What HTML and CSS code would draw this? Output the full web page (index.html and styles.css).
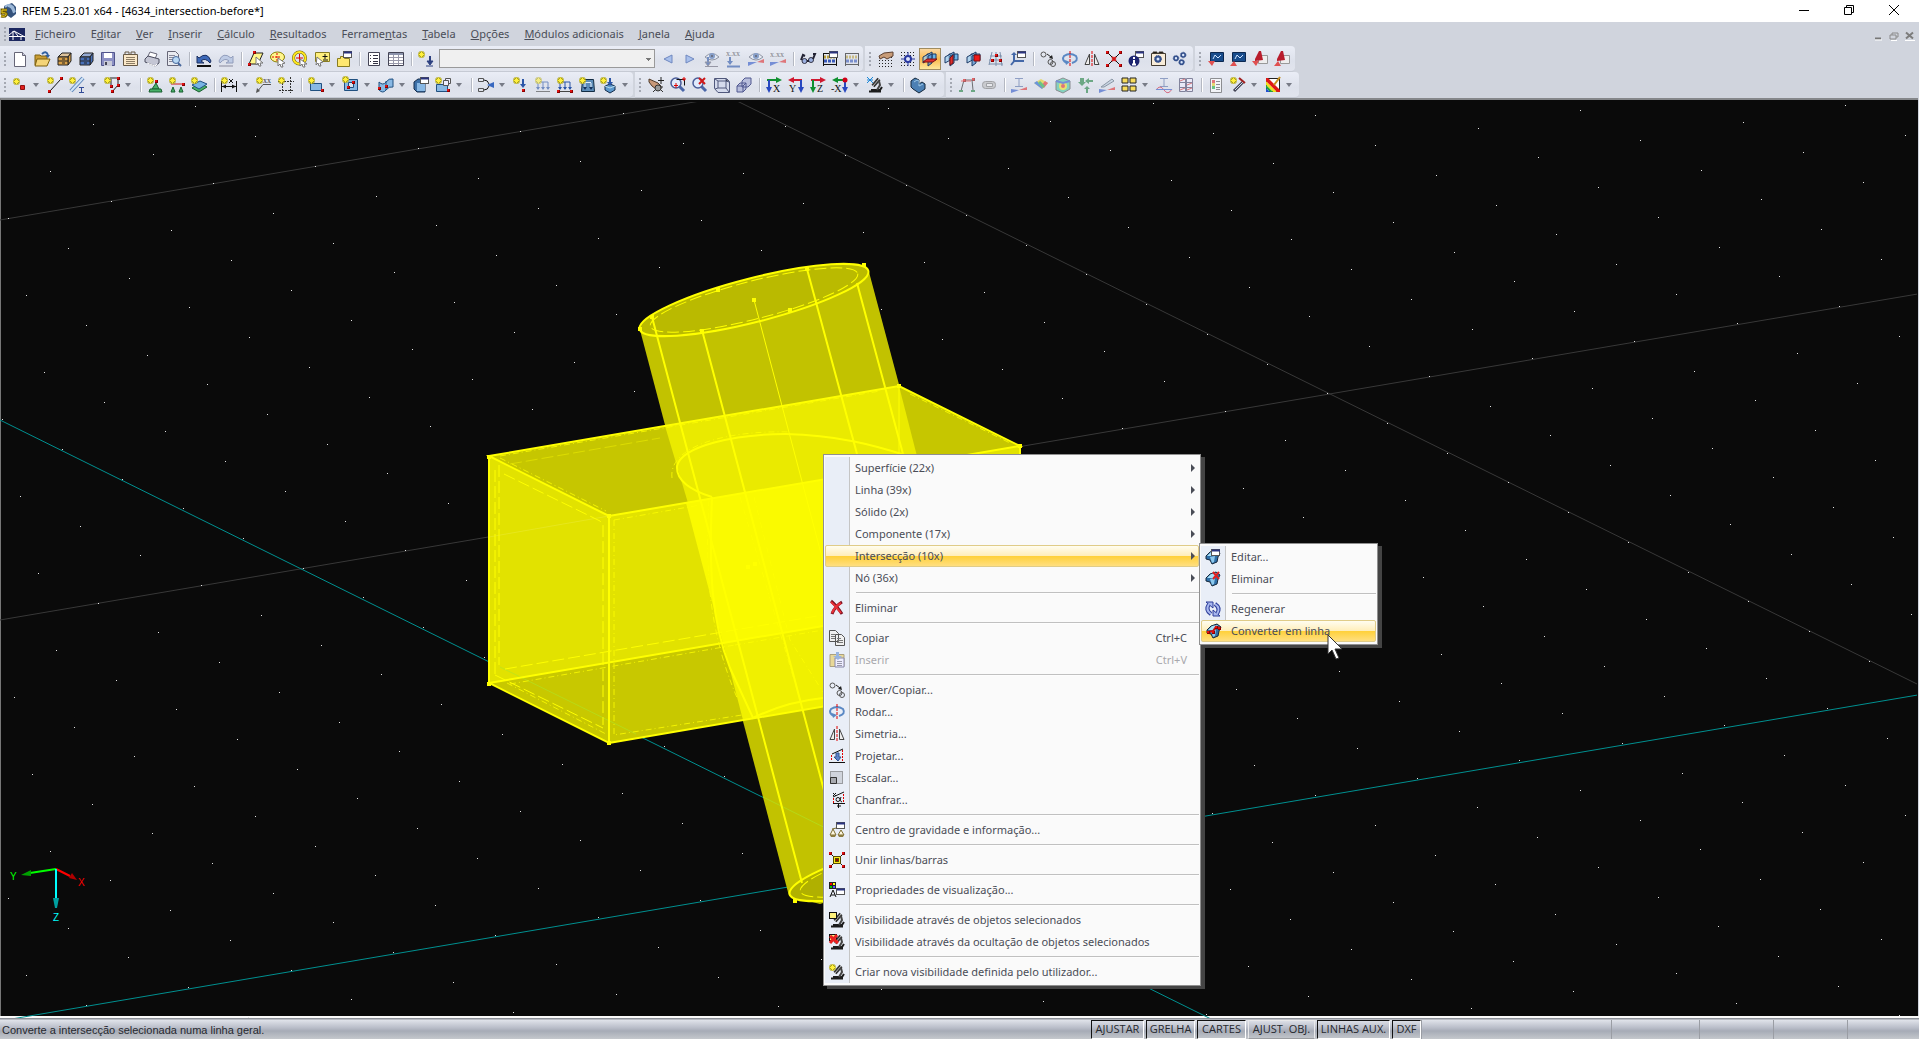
FILE: index.html
```html
<!DOCTYPE html>
<html lang="pt">
<head>
<meta charset="utf-8">
<title>RFEM 5.23.01 x64 - [4634_intersection-before*]</title>
<link rel="stylesheet" href="styles.css">
</head>
<body>
<svg class="defs" aria-hidden="true">
  <defs>
    <g id="star"><path d="M3.500 0v7M0 3.500h7M1 1l5 5M6 1L1 6" stroke="#a8a020" stroke-width="2"/><path d="M3.500 .5v6M.5 3.500h6M1.500 1.500l4 4M5.500 1.500l-4 4" stroke="#fff03c"/></g>
    <g id="dot"><rect width="3" height="3" fill="#e01010"/><path d="M0 2.500h3M2.500 0v3" stroke="#8c0000"/></g>
    <g id="win"><rect x=".5" y=".5" width="8" height="6" fill="#fff" stroke="#555"/><path d="M1 1.500h8" stroke="#2b3480" stroke-width="2"/></g>
    <g id="solid"><path d="M1 7l4-4 6-2 4 3-2 4-1 5-5 2-2-4-4-1z" fill="#2f6fa8" stroke="#16283c"/><path d="M2 7l4-4 6-1-3 5z" fill="#a8e0f8"/><path d="M5 8l5-1-1 6-2 1z" fill="#8cc8ec"/></g>
    <g id="lens"><path d="M9 9l5 5" stroke="#4a66a8" stroke-width="3"/><circle cx="6" cy="6" r="5" fill="#dfeafc" stroke="#4a5c98" stroke-width="1.500"/></g>
    <g id="scope"><path d="M2 14.500h12M4 13h9l2-3" stroke="#1c1c1c" stroke-width="2" fill="none"/><path d="M6 9l6-7" stroke="#333" stroke-width="4"/><path d="M6 9l6-7" stroke="#bbb"/><path d="M12 4l1 4-3 5" stroke="#444" stroke-width="2" fill="none"/></g>
    <g id="planes"><path d="M5 3h9v6H5z" fill="#6db4e6" stroke="#1c3a66"/><path d="M1 12V6l9-5v6z" fill="#9ccdf0" stroke="#1c3a66" fill-opacity=".7"/><path d="M6 15V5l4-2v9z" fill="#4c8ccc" stroke="#1c3a66" fill-opacity=".7"/></g>
    <g id="loads"><path d="M3 5h10M3 5v7M8 5v7M13 5v7" stroke="#2c56a8"/><path d="M1 10h4l-2 3zM6 10h4l-2 3zM11 10h4l-2 3z" fill="#2c56a8"/><path d="M1 14.500h14" stroke="#444"/></g>
    <g id="eye"><path d="M1 6q7-7 14 0q-7 6-14 0z" fill="#e8eef8" stroke="#5a6072"/><circle cx="8" cy="5" r="3" fill="#4a70b0"/><circle cx="8" cy="5" r="1" fill="#112"/></g>
    <g id="move"><circle cx="3.500" cy="3.500" r="2.500" fill="none" stroke="#555"/><circle cx="10.500" cy="11" r="2.500" fill="none" stroke="#555"/><circle cx="13" cy="13" r="2.500" fill="none" stroke="#555"/><path d="M7 3l4 3" stroke="#222"/><path d="M13 8l-4-1 3-3z" fill="#222"/></g>
    <g id="rotate"><path d="M5 12q-6-3-3-7q6-4 12 0q3 5-4 7" fill="none" stroke="#5a88c4" stroke-width="2"/><path d="M3 9l5 2-4 3z" fill="#5a88c4"/><path d="M8 0v16" stroke="#e00000" stroke-dasharray="3 1"/></g>
    <g id="mirror"><path d="M5.500 3v10.500H1zM10.500 3v10.500H15z" fill="#eee" stroke="#444"/><path d="M8 0v16" stroke="#e00000" stroke-dasharray="3 1"/></g>
    <g id="join"><path d="M2 2l12 12M14 2L2 14" stroke="#111"/><use href="#dot"/><use href="#dot" x="13"/><use href="#dot" y="13"/><use href="#dot" x="13" y="13"/></g>
    <g id="redx"><path d="M2 1q5 4 11 13M13 2Q6 6 3 14" stroke="#7c1020" stroke-width="3" fill="none"/><path d="M2 2q5 4 10 11M12 3Q6 6 3 13" stroke="#e83038" stroke-width="2" fill="none"/></g>
    <g id="cab"><path d="M2 6l4-4h9l-3 4z" fill-opacity=".5" stroke="#222"/><path d="M12 6l3-4v8l-3 4z" stroke="#222"/><path d="M2 6h10v8H2z" stroke="#222"/><path d="M2 10h10M6 8h3M6 12h3" stroke="#222"/></g>
    <g id="abacus"><path d="M1.500 2v13M14.500 2v13M1 13.500h14M1 2.500h13" stroke="#111"/><path d="M2 6h12" stroke="#b8a040" stroke-width="3" stroke-dasharray="2 1"/><path d="M2 10h12" stroke="#3858b8" stroke-width="3" stroke-dasharray="3 1"/></g>
    <g id="gear"><circle cx="4" cy="4" r="2.500" fill="#dce8fc" stroke="#34508c" stroke-width="2"/><circle cx="4" cy="4" r="3.500" fill="none" stroke="#34508c" stroke-dasharray="1 1"/></g>
    <g id="beam"><path d="M4 1.500h8M8 2v7M4 9.500h8" stroke="#5870a8"/></g>
  </defs>
</svg>

<div class="app">
  <header class="title">
    <svg width="18" height="18" aria-hidden="true"><path d="M4 4l8-3 4 4v7l-5 4-7-5z" fill="#34527c"/><path d="M5 5q4-4 8 0l2 5M8 4q4 0 6 7" stroke="#9cb8d8" fill="none" stroke-width="2"/><path d="M7 8H2v3q5-1 4 2q-1 2-5 1" stroke="#6c5800" fill="none" stroke-width="3"/><path d="M7 8H2v3q5-1 4 2q-1 2-5 1" stroke="#f0d020" fill="none" stroke-width="1"/></svg>
    <h1>RFEM 5.23.01 x64 - [4634_intersection-before*]</h1>
    <div class="winbtns">
      <button aria-label="Minimizar"><svg width="12" height="12"><path d="M1 6.500h10" stroke="#000"/></svg></button>
      <button aria-label="Restaurar"><svg width="12" height="12"><path d="M1.500 3.500h7v7h-7zM3.500 3V1.500h7v7H9" stroke="#000" fill="none"/></svg></button>
      <button aria-label="Fechar"><svg width="12" height="12"><path d="M1 1l10 10M11 1L1 11" stroke="#000"/></svg></button>
    </div>
  </header>

  <nav class="menubar">
    <span class="grip"></span>
    <svg width="16" height="13" aria-hidden="true"><path d="M0 0h16v13H0z" fill="#1c2860"/><path d="M0 8.500h16M4 12V3M0 7l5-4 11 6M12 12V8M5 3L9 8" stroke="#fff" fill="none"/></svg>
    <ul>
      <li><a href="#"><u>F</u>icheiro</a></li><li><a href="#">E<u>d</u>itar</a></li><li><a href="#"><u>V</u>er</a></li><li><a href="#"><u>I</u>nserir</a></li><li><a href="#"><u>C</u>álculo</a></li><li><a href="#"><u>R</u>esultados</a></li><li><a href="#">Ferrame<u>n</u>tas</a></li><li><a href="#"><u>T</u>abela</a></li><li><a href="#"><u>O</u>pções</a></li><li><a href="#"><u>M</u>ódulos adicionais</a></li><li><a href="#"><u>J</u>anela</a></li><li><a href="#"><u>A</u>juda</a></li>
    </ul>
    <div class="docbtns">
      <button aria-label="Minimizar documento"><svg width="10" height="10"><path d="M2 7.500h6" stroke="#777" stroke-width="2"/><path d="M2 9h7" stroke="#fff"/></svg></button>
      <button aria-label="Restaurar documento"><svg width="10" height="10"><path d="M1 4h6v4H1zM3 4V2h6v4H7" stroke="#8a8a8a" fill="none"/><path d="M2 9.500h6" stroke="#fff"/></svg></button>
      <button aria-label="Fechar documento"><svg width="10" height="10"><path d="M1 1.500l7 6M8 1.500l-7 6" stroke="#7c7c7c" stroke-width="2"/><path d="M0 9.500h10" stroke="#fff"/></svg></button>
    </div>
  </nav>

  <div class="toolrow">
    <div class="bar">
      <span class="grip"></span>
      <button class="tb" aria-label="Novo"><svg><path d="M2.500 1.500h8l3 3v11h-11z" fill="#fff" stroke="#667"/><path d="M10.500 1.500v3h3" fill="#ccd" stroke="#667"/></svg></button>
      <button class="tb" aria-label="Abrir"><svg><path d="M1 4h5l1 1h6v9H1z" fill="#c89c34" stroke="#7c6010"/><path d="M3 8h13l-3 7H1z" fill="#f4d478" stroke="#7c6010"/><path d="M8 3q4-4 6 1" stroke="#3060a0" fill="none" stroke-width="2"/><path d="M11 4h5l-2 3z" fill="#3060a0"/></svg></button>
      <button class="tb" aria-label="Gestor de projetos"><svg fill="#d8a048"><use href="#cab"/></svg></button>
      <button class="tb" aria-label="Gestor de blocos"><svg fill="#4870b8"><use href="#cab"/></svg></button>
      <button class="tb" aria-label="Guardar"><svg><path d="M1.500 1.500h13v13h-13z" fill="#8c90c4" stroke="#50548c"/><path d="M4 2h8v5H4z" fill="#fff"/><path d="M4 10h8v5H4z" fill="#c8cad8"/><path d="M5 11h2v3H5z" fill="#445"/></svg></button>
      <button class="tb" aria-label="Comentário"><svg><path d="M1.500 3.500h14v11h-14z" fill="#fbe8c8" stroke="#665844"/><path d="M3 3V1h4v2M9 3V1h4v2" stroke="#665844" fill="none"/><path d="M4 6.500h9M4 8.500h9M4 10.500h9M4 12.500h9" stroke="#8c7c64"/></svg></button>
      <button class="tb" aria-label="Imprimir"><svg><path d="M4 5l2-4 7 2-2 5z" fill="#fff" stroke="#667"/><path d="M1 8l3-3 11 3v4l-4 3-10-4z" fill="#c4c6d4" stroke="#4c4e60"/><path d="M3 12l8 3 2-2" fill="none" stroke="#fff"/></svg></button>
      <button class="tb" aria-label="Pré-visualizar"><svg><path d="M1.500.5h8l3 3v11h-11z" fill="#e8eaf0" stroke="#667"/><path d="M3 4.500h6M3 6.500h6M3 8.500h4M3 10.500h4" stroke="#889"/><circle cx="10" cy="9" r="3.500" fill="#b8d8f4" stroke="#48689c"/><path d="M12 12l3 3" stroke="#48689c" stroke-width="2"/></svg></button>
      <span class="sep"></span>
      <button class="tb" aria-label="Anular"><svg><path d="M3 7q8-7 12 3l-1 2q-5-6-9-2l3 2H1V5z" fill="#3c68b8" stroke="#1c3060"/><path d="M1 15h14" stroke="#111" stroke-width="2"/></svg></button>
      <button class="tb dim" aria-label="Refazer"><svg><path d="M13 7q-8-7-12 3l1 2q5-6 9-2l-3 2h7V5z" fill="#a8bce0" stroke="#60709c"/><path d="M1 15h14" stroke="#99a" stroke-width="2"/></svg></button>
      <span class="sep"></span>
      <button class="tb" aria-label="Seleção por paralelogramo"><svg><path d="M6 2h9l-5 11H1z" fill="#fff68c" stroke="#222"/><path d="M8 6l7 6-3 0 1 3-2 0-1-3-2 2z" fill="#fff" stroke="#777"/><use href="#dot" x="5"/><use href="#dot" y="12"/></svg></button>
      <button class="tb" aria-label="Seleção por elipse"><svg><ellipse cx="7.500" cy="6" rx="7" ry="5" fill="#fff68c" stroke="#887c00"/><path d="M2 6h9M7 2v8" stroke="#e00000" stroke-dasharray="2 1"/><path d="M8 7l7 5-3 1 1 3-2 0-1-3-2 2z" fill="#fff" stroke="#777"/></svg></button>
      <button class="tb" aria-label="Seleção por anel"><svg><circle cx="7.500" cy="7" r="6" fill="none" stroke="#665c00" stroke-width="3"/><circle cx="7.500" cy="7" r="6" fill="none" stroke="#ffe820" stroke-width="2"/><path d="M4 7h7M7.500 3v8" stroke="#e00000"/><path d="M8 8l7 5-3 0 1 3-2 0-1-3-2 2z" fill="#fff" stroke="#777"/></svg></button>
      <button class="tb" aria-label="Adicionar à seleção"><svg><path d="M1.500 1.500h14v9h-14z" fill="#fff07c" stroke="#887c20"/><path d="M11 3v5M8.500 5.500h5M9 9h5" stroke="#111"/><path d="M3 6l6 5-3 1 1 3-2 0-1-3-2 2z" fill="#fff" stroke="#777"/></svg></button>
      <button class="tb" aria-label="Seleção especial"><svg><path d="M1.500 7.500h3v-2h4v2h5v8h-12z" fill="#ffe870" stroke="#887c20"/><use href="#win" x="7"/></svg></button>
      <span class="sep"></span>
      <button class="tb" aria-label="Navegador"><svg><path d="M2.500 1.500h11v13h-11z" fill="#fff" stroke="#445"/><path d="M4 4.500h1M4 7.500h1M4 10.500h1M7 4.500h5M7 7.500h5M7 10.500h5M7 12.500h5" stroke="#334"/></svg></button>
      <button class="tb" aria-label="Tabelas"><svg><path d="M.5 1.500h15v13H.5z" fill="#fff" stroke="#445"/><path d="M1 3h14" stroke="#8c94ac" stroke-width="2"/><path d="M1 6.500h14M1 9.500h14M1 12.500h14M5.500 4v10M10.500 4v10" stroke="#99a"/></svg></button>
      <span class="sep"></span>
      <button class="tb" aria-label="Novo caso de carga"><svg><use href="#star"/><path d="M12 5v6" stroke="#2c4080" stroke-width="2"/><path d="M9 10h6l-3 4zM8 15h7" fill="#2c4080" stroke="#2c4080"/></svg></button>
      <select class="combo" aria-label="Caso de carga"><option></option></select>
      <button class="tb" aria-label="Anterior"><svg><path d="M12 4v8L4 8z" fill="#a8c0ec" stroke="#7088c0"/></svg></button>
      <button class="tb" aria-label="Seguinte"><svg><path d="M4 4v8l8-4z" fill="#a8c0ec" stroke="#7088c0"/></svg></button>
      <button class="tb dim" aria-label="Mostrar cargas"><svg><use href="#eye"/><path d="M4 6v8" stroke="#2c56a8" stroke-width="2"/><path d="M1 11h6l-3 4zM1 15.500h13" fill="#2c56a8" stroke="#667"/></svg></button>
      <button class="tb dim" aria-label="Valores das cargas"><svg><text x="0" y="5" class="tiny">x.xx</text><path d="M4 6v7M1 15.500h13" stroke="#2c56a8" stroke-width="2"/><path d="M1 10h6l-3 4z" fill="#2c56a8"/></svg></button>
      <button class="tb dim" aria-label="Mostrar resultados"><svg><use href="#eye"/><path d="M0 11v4l9-4z" fill="#3058c8"/><path d="M16 8v4l-7-1z" fill="#e03030"/></svg></button>
      <button class="tb dim" aria-label="Valores dos resultados"><svg><text x="0" y="6" class="tiny">x.xx</text><path d="M0 11v4l9-4z" fill="#3058c8"/><path d="M16 8v4l-7-1z" fill="#e03030"/></svg></button>
      <span class="sep"></span>
      <button class="tb" aria-label="Óculos"><svg><circle cx="4.500" cy="10" r="2.500" fill="#9cb0e0" stroke="#334"/><circle cx="11" cy="9" r="2.500" fill="#9cb0e0" stroke="#334"/><path d="M1 9l2-5 2 1M13 8l2-5-2 0M7 10h2" stroke="#223" fill="none" stroke-width="2"/></svg></button>
      <button class="tb" aria-label="Calcular tudo"><svg><use href="#abacus"/><use href="#win" x="7"/></svg></button>
      <button class="tb dim" aria-label="Calcular"><svg><use href="#abacus"/></svg></button>
    </div>
    <div class="bar">
      <span class="grip"></span>
      <button class="tb" aria-label="Plano de trabalho"><svg><path d="M1 6.500h14M1 9.500h14M1 12.500h14M1 15.500h14" stroke="#222" stroke-dasharray="1 2"/><path d="M1 5l5-3 9-1v4l-6 3-3-2-4 2z" fill="#c89c78" stroke="#5c4030"/></svg></button>
      <button class="tb" aria-label="Grelha"><svg><path d="M1 1.500h15M1 4.500h15M1 11.500h15M1 14.500h15" stroke="#222" stroke-dasharray="1 2"/><path d="M8 1v14M1 8h14" stroke="#2838a0"/><circle cx="8" cy="8" r="3" fill="#e0e6ff" stroke="#2838a0" stroke-width="2"/></svg></button>
      <button class="tb active" aria-label="Plano XY" aria-pressed="true"><svg><use href="#planes"/><path d="M1 11l4-3h10l-4 3z" fill="#e03030" stroke="#7c1010"/></svg></button>
      <button class="tb" aria-label="Plano YZ"><svg><use href="#planes"/><path d="M6 14V7l3-3v8z" fill="#e03030" stroke="#7c1010"/></svg></button>
      <button class="tb" aria-label="Plano XZ"><svg><use href="#planes"/><path d="M8 4h6v6H8z" fill="#f01818" stroke="#7c1010"/></svg></button>
      <button class="tb" aria-label="Linhas auxiliares"><svg><path d="M4 1L1 14M8 1v14M12 1l2 14M2 5h12M1 9h13M1 13h14" stroke="#7c90ac" fill="none"/><use href="#dot" x="7" y="3"/><use href="#dot" x="3" y="8"/><use href="#dot" x="11" y="8"/></svg></button>
      <button class="tb" aria-label="Sistema de coordenadas"><svg><path d="M4 10h10M4 11V3M5 9l-4 5" stroke="#4468a8" stroke-width="2"/><path d="M1 4l3-3 3 3" fill="#4468a8"/><use href="#win" x="7"/></svg></button>
      <span class="sep"></span>
      <button class="tb" aria-label="Mover ou copiar"><svg><use href="#move"/></svg></button>
      <button class="tb" aria-label="Rodar"><svg><use href="#rotate"/></svg></button>
      <button class="tb" aria-label="Simetria"><svg><use href="#mirror"/></svg></button>
      <button class="tb" aria-label="Unir linhas"><svg><use href="#join"/><path d="M6 6l4 4M10 6l-4 4" stroke="#d01818" stroke-width="2"/></svg></button>
      <button class="tb" aria-label="Informação"><svg><use href="#win" x="7"/><circle cx="6" cy="10" r="5.500" fill="#1c2470"/><path d="M6 6v2M6 9v4M4 13.500h4" stroke="#fff" stroke-width="2"/></svg></button>
      <button class="tb" aria-label="Opções"><svg><path d="M1.500 2.500h14v12h-14z" fill="#f8ecd8" stroke="#443c30"/><path d="M3 2V1h4v1M9 2V1h4v1" stroke="#443c30"/><use href="#gear" x="4" y="4"/></svg></button>
      <button class="tb" aria-label="Parâmetros"><svg><g transform="scale(.8)"><use href="#gear" x="1" y="5"/><use href="#gear" x="10" y="1"/><use href="#gear" x="8" y="10"/></g></svg></button>
    </div>
    <div class="bar">
      <span class="grip"></span>
      <button class="tb" aria-label="Importar 1"><svg><path d="M2.500 1.500h13v9h-13z" fill="#184c8c" stroke="#0c2850"/><path d="M5 8l2-4 3 3 3-3" stroke="#cfe4ff" fill="none"/><path d="M0 10h7l-3 5z" fill="#e05050"/></svg></button>
      <button class="tb" aria-label="Exportar 1"><svg><path d="M2.500 1.500h13v9h-13z" fill="#184c8c" stroke="#0c2850"/><path d="M5 8l2-4 3 3 3-3" stroke="#cfe4ff" fill="none"/><path d="M0 15h7l-3-5z" fill="#e05050"/></svg></button>
      <button class="tb" aria-label="Importar 2"><svg><path d="M6.500 4.500h9v8h-9z" fill="#eee" stroke="#999"/><path d="M3 10V8L7 0h2l2 9z" fill="#b81c2c"/><path d="M0 10h7l-3 5z" fill="#e05050"/></svg></button>
      <button class="tb" aria-label="Exportar 2"><svg><path d="M6.500 4.500h9v8h-9z" fill="#eee" stroke="#999"/><path d="M3 10V8L7 0h2l2 9z" fill="#b81c2c"/><path d="M0 15h7l-3-5z" fill="#e05050"/></svg></button>
    </div>
  </div>

  <div class="toolrow">
    <div class="bar">
      <span class="grip"></span>
      <button class="tb dd" aria-label="Novo nó"><svg><use href="#star" x="1" y="1"/><path d="M8.500 8.500h4v4h-4z" fill="#e02020" stroke="#901010"/></svg></button>
      <button class="tb" aria-label="Nova linha"><svg><path d="M3 14L14 2" stroke="#111"/><use href="#star"/><use href="#dot" x="13"/><use href="#dot" x="1" y="13"/></svg></button>
      <button class="tb dd" aria-label="Nova barra"><svg><path d="M2 14L14 1" stroke="#5c84b8" stroke-width="4"/><path d="M2 14L14 1" stroke="#cfe4f8" stroke-width="2"/><use href="#star"/><path d="M10 10.500h5M12.500 11v4M10 15.500h5" stroke="#334c98"/></svg></button>
      <button class="tb dd" aria-label="Nova polilinha"><svg><path d="M6 1h8v7l-6 7M7 2v8" stroke="#222" fill="none"/><use href="#star"/><use href="#dot" x="13"/><use href="#dot" x="13" y="7"/><use href="#dot" x="7" y="13"/><use href="#dot" x="6" y="8"/></svg></button>
      <span class="sep"></span>
      <button class="tb" aria-label="Apoio nodal"><svg><path d="M9 6l3 6H5z" fill="#48b068" stroke="#186030"/><path d="M3 12h11l1 3H2z" fill="#48b068" stroke="#186030"/><use href="#star"/><use href="#dot" x="8" y="3"/></svg></button>
      <button class="tb" aria-label="Apoio linear"><svg><path d="M2 7h12" stroke="#d01818"/><path d="M4 10l2 5H2zM12 10l2 5h-4z" fill="#48b068" stroke="#186030"/><use href="#star"/><use href="#dot" x="13" y="6"/></svg></button>
      <button class="tb" aria-label="Apoio de superfície"><svg><path d="M1 11l8-5 7 4-8 5z" fill="#48b068" stroke="#186030"/><path d="M1 8l8-4 7 3-8 5z" fill="#78b4e4" stroke="#205080"/><use href="#star"/></svg></button>
      <span class="sep"></span>
      <button class="tb dd" aria-label="Cota"><svg><path d="M.5 4v11M15.500 4v11M1 9.500h14" stroke="#111"/><path d="M1 9.500l4-2v4zM15 9.500l-4-2v4z" fill="#111"/><path d="M8 2l4 4M12 2L8 6" stroke="#111"/><use href="#star"/></svg></button>
      <button class="tb" aria-label="Comentário"><svg><text x="7" y="6" class="tiny">xx</text><path d="M15 7.500H7L1 15" stroke="#555" fill="none"/><path d="M0 16l1-5 3 3z" fill="#555"/><use href="#star"/></svg></button>
      <button class="tb" aria-label="Linha auxiliar"><svg><path d="M4.500 3v13M12.500 0v16M0 4.500h16M1 13.500h15" stroke="#333" stroke-dasharray="2 1"/><use href="#star"/></svg></button>
      <span class="sep"></span>
      <button class="tb dd" aria-label="Nova superfície"><svg><path d="M2.500 6.500h11v7h-11z" fill="#88b8e4" stroke="#205080"/><use href="#star"/><use href="#dot" x="13" y="12"/></svg></button>
      <button class="tb dd" aria-label="Nova abertura"><svg><path d="M1.500 2.500h13v11h-13z" fill="#88b8e4" stroke="#205080"/><path d="M5.500 5.500h5v5h-5z" fill="#dce4f0" stroke="#205080"/><use href="#dot" x="4" y="9"/><use href="#dot" x="9" y="4"/><use href="#star" x="-1" y="-1"/></svg></button>
      <button class="tb dd" aria-label="Superfície curva"><svg><path d="M1 5q4 4 7 0t7-3v8q-4-1-7 3t-7 0z" fill="#88b8e4" stroke="#205080"/><path d="M8 4v9" stroke="#205080"/><use href="#dot" y="10"/><use href="#dot" x="7" y="8"/></svg></button>
      <button class="tb" aria-label="Novo sólido"><svg><path d="M1 5l4-3h9l-2 4v9H4l-3-3z" fill="#3c70a8" stroke="#142c4c"/><path d="M4 6h8v8H4z" fill="#88b8e4"/><use href="#win" x="7"/></svg></button>
      <button class="tb dd" aria-label="Copiar sólido"><svg><path d="M1.500 7.500h11v7h-11z" fill="#88b8e4" stroke="#205080"/><path d="M8.500 3.500h5v5h-5zM10.500 3V1.500h5v5H14" fill="#eef" stroke="#555"/><use href="#star"/><use href="#dot" x="12" y="12"/></svg></button>
      <span class="sep"></span>
      <button class="tb dd" aria-label="Ligações"><svg><path d="M.5 1.500h5v3h-5zM.5 11.500h5v3h-5z" fill="none" stroke="#555"/><path d="M6 3q4 0 5 4M6 13q4 0 5-4" fill="none" stroke="#111"/><path d="M9 8l7-3v6z" fill="#3868c0"/></svg></button>
      <button class="tb" aria-label="Carga nodal"><svg><use href="#star"/><path d="M10 2v6" stroke="#2c56a8" stroke-width="2"/><path d="M7 7h6l-3 4z" fill="#2c56a8"/><use href="#dot" x="9" y="12"/></svg></button>
      <button class="tb dim" aria-label="Carga de barra"><svg><use href="#loads"/><use href="#star"/></svg></button>
      <button class="tb" aria-label="Carga linear"><svg><use href="#loads"/><use href="#star"/><use href="#dot" y="13"/><use href="#dot" x="13" y="13"/></svg></button>
      <button class="tb" aria-label="Carga de superfície"><svg><path d="M3.500 2.500h11l1 12h-13z" fill="#5c8cb8" stroke="#122c44"/><path d="M6 6v5M12 6v5M6 5.500h6" stroke="#e4f0fc"/><path d="M4 10h4l-2 3zM10 10h4l-2 3z" fill="#12305c"/><use href="#star"/></svg></button>
      <button class="tb dd" aria-label="Carga de sólido"><svg><path d="M4 9l5-2 5 2v4l-5 3-5-3z" fill="#5c98cc" stroke="#142c4c"/><path d="M4 9l5 2 5-2" stroke="#bde" fill="none"/><path d="M9 1v5" stroke="#2c56a8" stroke-width="2"/><path d="M6 5h6l-3 4z" fill="#2c56a8"/><use href="#star" x="-1"/></svg></button>
    </div>
    <div class="bar">
      <span class="grip"></span>
      <button class="tb" aria-label="Mover vista"><svg><path d="M1 2l9 4 3 3v3H8L4 9 1 5z" fill="#c89878" stroke="#4c3828"/><path d="M13 0v7M10 3.500h6" stroke="#222"/><circle cx="10" cy="11" r="3" fill="#999" stroke="#333"/><path d="M5 15l2-2M15 15l-2-2M15 10h-2" stroke="#333"/></svg></button>
      <button class="tb" aria-label="Zoom por janela"><svg><use href="#lens"/><path d="M6.500 2.500h8v6" stroke="#111" fill="none"/><path d="M14 0v4M12 2h4M4 8.500h4M6 6v5" stroke="#e00000"/></svg></button>
      <button class="tb" aria-label="Zoom anterior"><svg><use href="#lens"/><path d="M7 1l6 6M13 1L7 7" stroke="#d01818" stroke-width="2"/></svg></button>
      <button class="tb" aria-label="Vista isométrica"><svg><path d="M.5 1.500h12l3 3v11H4l-3.500-4zM4 4h8v7H4z" fill="#d4daec" stroke="#50587c"/><path d="M1 2l3 2M12 2v2l3 1M4 11l-3 1M12 11l3 4" stroke="#50587c"/></svg></button>
      <button class="tb" aria-label="Camadas"><svg><path d="M6 4l3-3h6v6l-3 3H6zM1 9l3-3h6v6l-3 3H1z" fill="#b8bedc" stroke="#505890"/><path d="M1 9h6v6M7 9l3-3" stroke="#505890" fill="none"/></svg></button>
      <span class="sep"></span>
      <button class="tb" aria-label="Vista X"><svg><path d="M1 3h11" stroke="#109030" stroke-width="2"/><path d="M10 0l6 3-6 3z" fill="#109030"/><path d="M3 3v10" stroke="#2848c0" stroke-width="2"/><path d="M0 10h6l-3 6z" fill="#2848c0"/><text x="7" y="15" class="axis">X</text></svg></button>
      <button class="tb" aria-label="Vista Y"><svg><path d="M4 3h10" stroke="#d01830" stroke-width="2"/><path d="M6 0L0 3l6 3z" fill="#d01830"/><path d="M13 3v10" stroke="#2848c0" stroke-width="2"/><path d="M10 10h6l-3 6z" fill="#2848c0"/><text x="1" y="15" class="axis">Y</text></svg></button>
      <button class="tb" aria-label="Vista Z"><svg><path d="M1 3h11" stroke="#d01830" stroke-width="2"/><path d="M10 0l6 3-6 3z" fill="#d01830"/><path d="M3 3v10" stroke="#109030" stroke-width="2"/><path d="M0 10h6l-3 6z" fill="#109030"/><text x="7" y="15" class="axis">Z</text></svg></button>
      <button class="tb dd" aria-label="Vista -X"><svg><path d="M4 3h8" stroke="#109030" stroke-width="2"/><path d="M6 0L0 3l6 3z" fill="#109030"/><path d="M13 3v10" stroke="#2848c0" stroke-width="2"/><path d="M10 10h6l-3 6z" fill="#2848c0"/><circle cx="13" cy="3" r="2.500" fill="#d00018"/><text x="-1" y="15" class="axis">-X</text></svg></button>
      <button class="tb dd" aria-label="Visibilidade"><svg><use href="#scope"/><path d="M0 0l6 6M6 0L0 6M0 3h6" stroke="#1c88d8"/></svg></button>
      <span class="sep"></span>
      <button class="tb dd" aria-label="Modelo sólido"><svg><path d="M1 4l4-3 4 2v4l3-2 3 2v5l-6 4-6-4-2-2z" fill="#4c80b4" stroke="#14283c"/><path d="M4 5l3-2 2 1v5l4-2" stroke="#9cc8e8" fill="none"/></svg></button>
    </div>
    <div class="bar">
      <span class="grip"></span>
      <button class="tb dim" aria-label="Deformação"><svg><path d="M2 14L5 3h8l1 10" stroke="#222" fill="none"/><path d="M2 4h10" stroke="#e03030"/><use href="#dot" x="4" y="2"/><use href="#dot" x="13" y="1"/><path d="M0 13h4v2H0zM12 13h4v2h-4z" fill="#208040"/></svg></button>
      <button class="tb dim" aria-label="Valores"><svg><rect x="1.500" y="4.500" width="13" height="7" rx="3" fill="#bbb" stroke="#777"/><path d="M5.500 6.500h6v3h-6z" fill="#eee" stroke="#777"/></svg></button>
      <span class="sep"></span>
      <button class="tb dim" aria-label="Esforços de barra"><svg><use href="#beam"/><path d="M0 12v4l8-3z" fill="#3058c8"/><path d="M16 10v3H8z" fill="#e03030"/></svg></button>
      <button class="tb dim" aria-label="Superfícies"><svg><path d="M1 6l7-4 7 4-6 6z" fill="#e8d020"/><path d="M1 6l3-2 6 7-1 1z" fill="#2060d0"/><path d="M15 6l-3-2-4 5 3 2z" fill="#e03030"/><path d="M6 5l5 5" stroke="#20b040" stroke-width="3"/></svg></button>
      <button class="tb dim" aria-label="Sólidos"><svg><path d="M1 4l7-3 7 3v8l-7 4-7-3z" fill="#48c8a0" stroke="#555"/><circle cx="8" cy="9" r="4" fill="#f0e020"/><circle cx="8" cy="9" r="2" fill="#e03030"/><path d="M1 4l7 2 7-2" stroke="#3058c8" fill="none" stroke-width="2"/></svg></button>
      <button class="tb dim" aria-label="Reações"><svg><path d="M3 1h4v4h2l-4 4-4-4h2z" fill="#208040"/><path d="M8 4l4-3v2h4v2h-4v2zM7 12l3-3 3 3h-2v4H9v-4z" fill="#208040"/></svg></button>
      <button class="tb dim" aria-label="Secções"><svg><path d="M2 10L13 2l2 2L5 10z" fill="#bcd" stroke="#567"/><path d="M0 12v4l8-3z" fill="#3058c8"/><path d="M16 10v3H8z" fill="#e03030"/></svg></button>
      <button class="tb dd" aria-label="Filtros"><svg><path d="M1 1h6v5H1zM9 1h6v5H9zM1 9h6v5H1zM9 9h6v5H9z" fill="#f8dc5c" stroke="#222"/></svg></button>
      <button class="tb dim" aria-label="Diagramas"><svg><use href="#beam"/><path d="M0 13q4-6 8 0t8-1" stroke="#d02040" fill="none"/><path d="M0 12.500h16" stroke="#3058c8"/></svg></button>
      <button class="tb dim" aria-label="Quadros"><svg><path d="M1.500 1.500h6v13h-6zM8.500 1.500h6v13h-6z" fill="#eef" stroke="#446"/><path d="M1 5.500h14M1 10.500h14" stroke="#446"/><path d="M2 4l5-2M9 8l5-2M2 13l5-2M9 13l5-2" stroke="#d03030"/></svg></button>
      <span class="sep"></span>
      <button class="tb dim" aria-label="Painel"><svg><path d="M2.500 1.500h11v14h-11z" fill="#fff" stroke="#555"/><path d="M4 3h3v3H4z" fill="#e03030"/><path d="M4 6h3v3H4z" fill="#e8d020"/><path d="M4 9h3v3H4z" fill="#20b040"/><path d="M8 4.500h4M8 7.500h4M8 10.500h4M8 12.500h4" stroke="#555"/></svg></button>
      <button class="tb dd" aria-label="Assistente"><svg><path d="M4 14l9-9" stroke="#445" stroke-width="3"/><path d="M5 13l8-8" stroke="#cde"/><path d="M9 1l6 5" stroke="#a02020" stroke-width="2"/><use href="#star"/></svg></button>
      <button class="tb dd" aria-label="Cores"><svg><path d="M1.500 1.500h13v13h-13z" fill="#fff" stroke="#222"/><path d="M1 4l11 11H8L1 8z" fill="#f0e020"/><path d="M1 1h2l12 12v2h-3L1 4z" fill="#e01818"/><path d="M1 8l7 7H5l-4-4z" fill="#20a838"/><path d="M1 11l4 4H1z" fill="#2050d0"/><path d="M15 0L9 8" stroke="#c89020" stroke-width="2"/></svg></button>
    </div>
  </div>

  <main class="stage">
    <svg class="scene" width="100%" height="100%" role="img" aria-label="Modelo 3D: caixa e cilindro em intersecção">
      <g transform="translate(0 -102)">
        <g stroke="#383838" fill="none">
          <path d="M0 220L2000-120M0 620L2000 280M735 100L2000 725"/>
        </g>
        <g stroke="#009090" fill="none">
          <path d="M0 420L1300 1063M0 1021L2000 681"/>
        </g>
        <g id="dots" fill="#e4e4e4" shape-rendering="crispEdges"></g>

        <!-- cylinder body, then box faces, then their overlaps -->
        <path d="M640 330L789 896L820 904L1020 838L869 272Z" fill="#c2c200"/>
        <ellipse cx="754" cy="300" rx="118" ry="22" transform="rotate(-14.300 754 300)" fill="#baba00"/>
        <ellipse cx="904" cy="865" rx="118" ry="22" transform="rotate(-14.300 904 865)" fill="#b0b000"/>
        <path d="M489 456L899 386L1020 446L609 516Z" fill="#c6c600"/>
        <path d="M489 456L609 516L1020 446V673L609 743L489 683Z" fill="#e2e200"/>
        <path d="M489 683L899 613L1020 673L609 743Z" fill="#c8c800"/>
        <path d="M665 426L899 386L919 464L688 503Z" fill="#eaea00"/>
        <path d="M686 503L919 464L960 602L723 643Z" fill="#fafa00"/>
        <path d="M723 643L960 602L980 680L743 720Z" fill="#f0f000"/>

        <g stroke="#aee628" fill="none" opacity=".6">
          <path d="M500 667L636 734M763 797L900 865"/>
          <path d="M489 537L609 516" stroke="#eaea30"/>
        </g>
        <g stroke="#ffff00" fill="none" stroke-width="2">
          <path d="M489 456L899 386L1020 446L609 516ZM489 456V683L609 743V516M609 743L1020 673V446M489 683L899 613"/>
          <path d="M899 386V460" stroke-width="1"/>
          <ellipse cx="754" cy="300" rx="118" ry="22" transform="rotate(-14.300 754 300)"/>
          <ellipse cx="904" cy="865" rx="118" ry="22" transform="rotate(-14.300 904 865)"/>
          <path d="M652 317L802 883M702 330L852 896M807 269L857 454M857 283L903 454"/>
          <path d="M712 497C690 490 676 480 677 466C682 446 735 434 786 434C836 435 874 445 908 456"/>
          <path d="M712 497C709 570 711 620 730 668L753 718Q785 702 823 698"/>
          <path d="M754 300L823 561" stroke-width="1"/>
        </g>
        <g stroke="#ffff00" fill="none" stroke-dasharray="12 4">
          <ellipse cx="754" cy="300" rx="107" ry="19" transform="rotate(-14.300 754 300)"/>
          <ellipse cx="904" cy="865" rx="107" ry="19" transform="rotate(-14.300 904 865)"/>
          <path d="M495 470V675M499 465V665M504 474L600 521L603 525V725M505 669L823 615M495 675L603 728"/>
          <path d="M510 464L660 438" opacity=".4"/>
        </g>
        <g stroke="#ffff00" fill="none" stroke-dasharray="6 3 1 3" opacity=".8">
          <path d="M614 520L700 505M614 520V735L742 715M500 458L606 511M510 684L735 645M735 645L823 630M500 456L880 391M910 394L1010 443"/>
          <path d="M672 478C668 445 730 430 790 432M709 500C704 580 712 640 738 700M740 497L800 700M754 497L790 640L823 692M507 683L606 734"/>
        </g>
        <path fill="#ffff00" d="M487 455h4v4h-4zM607 514h4v4h-4zM897 384h4v4h-4zM1018 444h4v4h-4zM487 682h4v4h-4zM607 741h4v4h-4zM650 315h4v4h-4zM700 329h4v4h-4zM752 298h4v4h-4zM805 267h4v4h-4zM862 263h4v4h-4zM716 288h4v4h-4zM638 327h4v4h-4zM788 308h4v4h-4zM746 565h4v4h-4zM753 562h4v4h-4zM793 899h4v4h-4z"/>

        <!-- coordinate triad -->
        <g stroke-width="2">
          <path d="M56 869L30 873" stroke="#00ff00"/><path d="M31 870v6l-10-1z" fill="#00a000"/>
          <path d="M56 869L70 876" stroke="#ff0000"/><path d="M72 873l5 7-8-2z" fill="#b00000"/>
          <path d="M56 869V900" stroke="#00ffff"/><path d="M53 898h6l-2 10h-2z" fill="#00a0a0"/>
        </g>
        <g class="triad"><text x="10" y="880" fill="#00ff00">Y</text><text x="78" y="886" fill="#ff0000">X</text><text x="53" y="921" fill="#00ffff">Z</text></g>
      </g>
    </svg>

    <div class="popup context" role="menu">
      <button role="menuitem"><i></i><span>Superfície (22x)</span><b></b></button>
      <button role="menuitem"><i></i><span>Linha (39x)</span><b></b></button>
      <button role="menuitem"><i></i><span>Sólido (2x)</span><b></b></button>
      <button role="menuitem"><i></i><span>Componente (17x)</span><b></b></button>
      <button role="menuitem" class="hot"><i></i><span>Intersecção (10x)</span><b></b></button>
      <button role="menuitem"><i></i><span>Nó (36x)</span><b></b></button>
      <hr>
      <button role="menuitem"><i><svg><use href="#redx"/></svg></i><span>Eliminar</span></button>
      <hr>
      <button role="menuitem"><i><svg><path d="M.5.5h6l3 3v8h-9zM6.500 4.500h6l3 3v8h-9z" fill="#f0f0f0" stroke="#555"/><path d="M2 4.500h4M2 6.500h4M2 8.500h4M8 8.500h4M8 10.500h6M8 12.500h6" stroke="#777"/></svg></i><span>Copiar</span><kbd>Ctrl+C</kbd></button>
      <button role="menuitem" disabled><i><svg><path d="M1 2.500h14v12H1z" fill="#e8d898" stroke="#aaa080"/><path d="M6 6h9v9H6z" fill="#eef" stroke="#88a"/><path d="M8 9.500h5M8 11.500h5M8 13.500h5" stroke="#99a"/><path d="M4 4h3V0h3v4h3l-4 4z" fill="#98b4e0"/></svg></i><span>Inserir</span><kbd>Ctrl+V</kbd></button>
      <hr>
      <button role="menuitem"><i><svg><use href="#move"/></svg></i><span>Mover/Copiar...</span></button>
      <button role="menuitem"><i><svg><use href="#rotate"/></svg></i><span>Rodar...</span></button>
      <button role="menuitem"><i><svg><use href="#mirror"/></svg></i><span>Simetria...</span></button>
      <button role="menuitem"><i><svg><path d="M0 14.500h16" stroke="#111"/><path d="M3 6l11-5" stroke="#111"/><path d="M2.500 7v6M13.500 2v11" stroke="#e00000" stroke-dasharray="2 1"/><path d="M7 5h3v4h2l-3 4-4-4h2z" fill="#5c84cc" stroke="#345490"/></svg></i><span>Projetar...</span></button>
      <button role="menuitem"><i><svg><path d="M1.500 1.500h12v12h-12z" fill="#d0d4dc" stroke="#555" stroke-dasharray="1 1"/><path d="M1.500 7.500h6v6h-6z" fill="#a8aab0" stroke="#333"/></svg></i><span>Escalar...</span></button>
      <button role="menuitem"><i><svg><path d="M4 5l11-5M4 11.500h12M9.500 11v5M8 14h4" stroke="#111"/><path d="M4 1l3 3M7 1L4 4" stroke="#111"/><path d="M4.500 6v5M14.500 2v9" stroke="#e00000" stroke-dasharray="2 1"/><circle cx="9" cy="7.500" r="2" fill="none" stroke="#111"/><path d="M12 5q-2 4 1 5" stroke="#111" fill="none"/></svg></i><span>Chanfrar...</span></button>
      <hr>
      <button role="menuitem"><i><svg><path d="M3 7l9-2M4 7l-3 6h6zM12 8l-3 5h6z" stroke="#7c6c30" fill="#fff8e0"/><path d="M1 13h6l-1 2H2zM9 13h6l-1 2h-4z" fill="#8c7c40"/><use href="#win" x="7"/></svg></i><span>Centro de gravidade e informação...</span></button>
      <hr>
      <button role="menuitem"><i><svg><use href="#join"/><rect x="5.500" y="5.500" width="5" height="5" fill="#fff" stroke="#554c00" stroke-width="3"/><rect x="5.500" y="5.500" width="5" height="5" fill="none" stroke="#ffe820"/><rect x="7" y="7" width="2" height="2" fill="#900"/></svg></i><span>Unir linhas/barras</span></button>
      <hr>
      <button role="menuitem"><i><svg><rect width="7" height="7" fill="#222"/><path d="M1 1h2v2H1z" fill="#f00"/><path d="M4 1h2v2H4z" fill="#ff0"/><path d="M1 4h2v2H1z" fill="#0c0"/><path d="M4 4h2v2H4z" fill="#55f"/><path d="M1 15l3-7 3 7M2 13h4" stroke="#111" fill="none"/><use href="#win" x="7" y="6"/></svg></i><span>Propriedades de visualização...</span></button>
      <hr>
      <button role="menuitem"><i><svg><use href="#scope"/><rect x=".5" y=".5" width="7" height="6" fill="#fff27c" stroke="#111"/></svg></i><span>Visibilidade através de objetos selecionados</span></button>
      <button role="menuitem"><i><svg><use href="#scope"/><rect x=".5" y=".5" width="7" height="6" fill="#fff27c" stroke="#111"/><path d="M1 2l8 7M8 1L1 9" stroke="#e82020" stroke-width="3"/></svg></i><span>Visibilidade através da ocultação de objetos selecionados</span></button>
      <hr>
      <button role="menuitem"><i><svg><use href="#scope"/><use href="#star"/></svg></i><span>Criar nova visibilidade definida pelo utilizador...</span></button>
    </div>

    <div class="popup sub" role="menu">
      <button role="menuitem"><i><svg><use href="#solid"/><use href="#win" x="6"/></svg></i><span>Editar...</span></button>
      <button role="menuitem"><i><svg><use href="#solid"/><path d="M8 1l6 7M14 1L8 8" stroke="#e02020" stroke-width="2"/></svg></i><span>Eliminar</span></button>
      <hr>
      <button role="menuitem"><i><svg><path d="M6 13Q0 9 4 3M10 3q6 4 2 10" stroke="#2c3c98" stroke-width="4" fill="none"/><path d="M1 1h7v6zM15 15H8V9z" fill="#a8b8f0" stroke="#2c3c98"/><path d="M6 13Q0 9 4 3M10 3q6 4 2 10" stroke="#a8b8f0" stroke-width="2" fill="none"/></svg></i><span>Regenerar</span></button>
      <button role="menuitem" class="hot"><i><svg><use href="#solid"/><path d="M2 9l5-1 3-4 4 1" stroke="#d01010" stroke-width="2" fill="none"/><use href="#dot" x="1" y="8"/><use href="#dot" x="6" y="8"/><use href="#dot" x="9" y="3"/><use href="#dot" x="12" y="4"/></svg></i><span>Converter em linha</span></button>
    </div>

    <svg class="pointer" width="18" height="28" aria-hidden="true"><path d="M1 1v19l4-4 4 9 3-1-4-9h7z" fill="#fff" stroke="#333"/></svg>
  </main>

  <footer class="status">
    <p>Converte a intersecção selecionada numa linha geral.</p>
    <div class="modes">
      <button class="on m1">AJUSTAR</button><button class="on m2">GRELHA</button><button class="on m2">CARTES</button><button class="m3">AJUST. OBJ.</button><button class="on m4">LINHAS AUX.</button><button class="on m5">DXF</button>
    </div>
    <div class="cells"><span></span><span></span><span></span><span></span><span></span></div>
  </footer>
</div>
<script src="grid.js"></script>
</body>
</html>
```

FILE: styles.css
```css
* { box-sizing: border-box; }

body {
  margin: 0;
  background: #d0d4dd;
  color: #4a4d57;
  font: 11px/14px "Noto Sans", "Open Sans", sans-serif;
}

button {
  margin: 0;
  padding: 0;
  border: 0;
  background: none;
  color: inherit;
  font: inherit;
}

.defs { position: absolute; width: 0; height: 0; }

.app {
  display: flex;
  flex-direction: column;
  height: 100vh;
  overflow: hidden;
}

/* title bar */
.title {
  display: flex;
  align-items: center;
  gap: 4px;
  height: 22px;
  flex: none;
  background: #fff;
  color: #000;
}
.title h1 { flex: 1; margin: 0; font: 11px/20px "Noto Sans", sans-serif; }
.winbtns { display: flex; padding-right: 3px; }
.winbtns button { width: 45px; height: 20px; }

/* menu bar */
.menubar {
  display: flex;
  align-items: center;
  height: 24px;
  flex: none;
}
.menubar ul {
  display: flex;
  flex: 1;
  gap: 15px;
  margin: 0 0 0 10px;
  padding: 0;
  list-style: none;
}
.menubar a { color: inherit; text-decoration: none; }
.docbtns { display: flex; gap: 6px; padding-right: 4px; }
.docbtns button { width: 10px; height: 8px; }

.grip {
  width: 9px;
  height: 14px;
  flex: none;
  background: repeating-linear-gradient(#a4a8b2 0 2px, transparent 2px 4px) 4px 0 / 2px 100% no-repeat;
}

/* toolbars */
.toolrow { display: flex; gap: 2px; height: 26px; flex: none; }
.bar {
  display: flex;
  align-items: center;
  padding-right: 2px;
  border-radius: 0 4px 4px 0;
  background: linear-gradient(#eaedf6, #dde1eb 60%, #e1e4ed);
  border-bottom: 1px solid #c6cad4;
}
.bar + .bar .grip { width: 10px; }
.bar:first-child { padding-right: 0; }
.tb {
  display: flex;
  align-items: center;
  justify-content: center;
  width: 22px;
  height: 22px;
  flex: none;
}
.tb svg, .popup svg { width: 16px; height: 16px; overflow: visible; }
.dim svg { opacity: .6; }
.active {
  border: 1px solid #a08c60;
  background: linear-gradient(#fbd8a0, #fbb94c 50%, #fde89c);
}
.dd { width: 35px; justify-content: flex-start; padding-left: 3px; gap: 5px; }
.dd::after {
  content: "";
  border: 3px solid transparent;
  border-top: 4px solid #777b86;
  border-bottom: 0;
}
.sep {
  width: 8px;
  height: 14px;
  flex: none;
  background: linear-gradient(90deg, #b4b8c2 0 1px, #fff 1px 2px) 4px 0 / 2px 100% no-repeat;
}
.combo {
  appearance: none;
  width: 216px;
  height: 19px;
  margin: 0 2px;
  border: 1px solid #9a9a9a;
  border-radius: 0;
  background: linear-gradient(#777, #777) 206px 8px / 5px 1px no-repeat, linear-gradient(#777, #777) 207px 9px / 3px 1px no-repeat, linear-gradient(#777, #777) 208px 10px / 1px 1px no-repeat, #f0f0f0;
}
.tiny { font: 8px "Liberation Serif", serif; fill: #333; }
.axis { font: 10px "Liberation Serif", serif; fill: #111; }

/* viewport */
.stage {
  position: relative;
  flex: 1;
  min-height: 0;
  margin-right: 1px;
  border-top: 2px solid #85878a;
  border-left: 1px solid #777;
  background: #0a0a0a;
}
.scene { display: block; position: absolute; left: -1px; top: 2px; }
.triad { font: 10px "Liberation Sans", sans-serif; }
.pointer { position: absolute; left: 1326px; top: 534px; }

/* popup menus */
.popup {
  position: absolute;
  padding: 2px 1px;
  border: 1px solid #909090;
  background: linear-gradient(90deg, #e9eef7 24px, #c5c5c5 24px 25px, #fafafa 25px) content-box, #fafafa;
  box-shadow: 4px 3px 0 #444;
}
.context { left: 822px; top: 354px; width: 378px; }
.sub { left: 1198px; top: 443px; width: 179px; }
.popup button {
  display: flex;
  align-items: center;
  width: 100%;
  height: 22px;
  text-align: left;
}
.popup i { display: flex; justify-content: center; width: 24px; flex: none; }
.popup span { flex: 1; padding-left: 6px; }
.popup kbd { font: inherit; padding-right: 12px; }
.popup b {
  margin-right: 4px;
  border: 4px solid transparent;
  border-left: 4px solid #4a4d57;
  border-right: 0;
}
.popup button:disabled { color: #a8a8ac; }
.popup .hot {
  border: 1px solid #e0cc88;
  border-radius: 2px;
  background: linear-gradient(#fffdf0, #ffeebb 48%, #ffd038 50%, #ffdf80);
}
.popup .hot i { width: 23px; }
.popup .hot b { margin-right: 3px; }
.popup hr {
  height: 2px;
  margin: 3px 0 3px 31px;
  border: 0;
  background: linear-gradient(#c0c0c0 50%, #fdfdfd 50%);
}

/* status bar */
.status {
  display: flex;
  align-items: stretch;
  height: 23px;
  flex: none;
  padding-top: 2px;
  border-top: 2px solid #fafafa;
  background: linear-gradient(#8c9098 0 1px, #e0e3ea 2px, #b8bcc8 10px, #a6abb6 13px, #c4c7cc);
  color: #26282e;
}
.status p { flex: 1; margin: 0; padding-left: 2px; font: 11px/20px "Liberation Sans", Arial, sans-serif; }
.modes { display: flex; gap: 2px; font: 11px/14px "Open Sans", sans-serif; }
.modes button {
  height: 19px;
  padding-bottom: 2px;
  border: 1px solid #e8e8ea;
  border-bottom-color: #9a9ca0;
  white-space: nowrap;
}
.modes .on { border-color: #111 #fff #fff #111; }
.m1 { width: 53px; }
.m2 { width: 49px; }
.m3 { width: 67px; }
.m4 { width: 73px; }
.m5 { width: 29px; }
.cells { display: flex; }
.cells span { width: 74px; border-left: 1px solid #9a9da4; }
.cells span:first-child { width: 190px; }
.cells span:nth-child(2) { width: 88px; }
.cells span:last-child { width: 72px; }
```

FILE: grid.js
```js
// Work-plane grid points: a skewed lattice spanned by two screen vectors.
const origin = { x: 496, y: 255 };
const a = { x: 60.2, y: 29.72 };
const b = { x: -102.4, y: 17.45 };
const layer = document.getElementById("dots");
const width = window.innerWidth;
const height = window.innerHeight;
let d = "";
for (let i = -40; i < 60; i++) {
  for (let j = -40; j < 60; j++) {
    const x = Math.round(origin.x + i * a.x + j * b.x);
    const y = Math.round(origin.y + i * a.y + j * b.y);
    if (x > 0 && x < width && y > 101 && y < height) d += `M${x} ${y}h1v1h-1z`;
  }
}
const path = document.createElementNS("http://www.w3.org/2000/svg", "path");
path.setAttribute("d", d);
layer.appendChild(path);
```
